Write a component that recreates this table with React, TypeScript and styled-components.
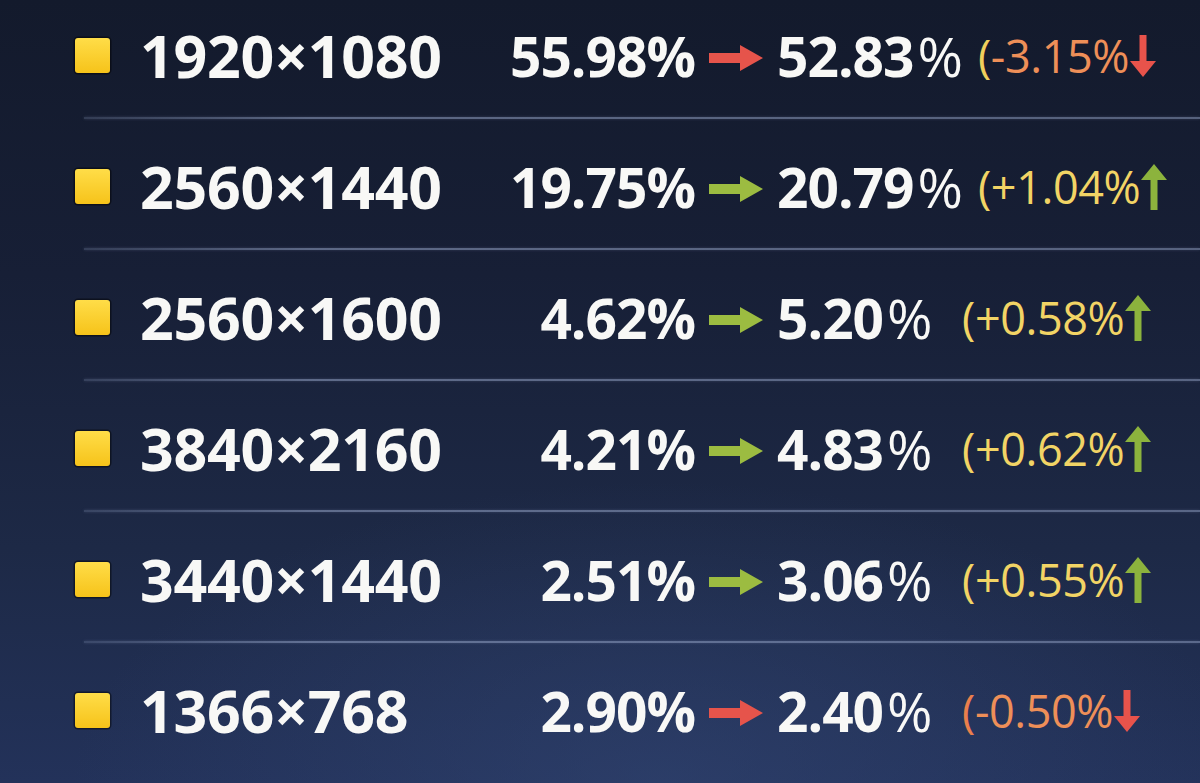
import React from "react";
import styled, { createGlobalStyle } from "styled-components";

const GlobalStyle = createGlobalStyle`
  html, body {
    margin: 0;
    padding: 0;
    background: #141b2f;
  }
  * {
    box-sizing: border-box;
  }
`;

const Page = styled.div`
  width: 1200px;
  height: 783px;
  overflow: hidden;
  background:
    radial-gradient(ellipse 70% 55% at 55% 100%, rgba(52, 72, 118, 0.5), rgba(52, 72, 118, 0) 70%),
    linear-gradient(180deg, #131a2c 0%, #171f36 35%, #1d2946 70%, #23325a 100%);
  font-family: "Open Sans", "Noto Sans", sans-serif;
  color: #f8f8f6;
`;

const List = styled.div`
  display: flex;
  flex-direction: column;
`;

const Row = styled.div<{ $first?: boolean }>`
  display: grid;
  grid-template-columns: 34px 331px 255px 82px 1fr;
  align-items: center;
  padding-left: 75px;
  height: ${(p) => (p.$first ? "117px" : "131px")};
  padding-top: ${(p) => (p.$first ? "0" : "8px")};
  padding-bottom: ${(p) => (p.$first ? "6px" : "0")};
  position: relative;

  &::before {
    content: "";
    display: ${(p) => (p.$first ? "none" : "block")};
    position: absolute;
    left: 84px;
    right: 0;
    top: 0;
    height: 2px;
    background: linear-gradient(
      90deg,
      rgba(140, 155, 190, 0.25) 0%,
      rgba(150, 165, 200, 0.55) 20%,
      rgba(150, 165, 200, 0.5) 100%
    );
    box-shadow: 0 0 3px rgba(150, 165, 200, 0.25);
  }
`;

const Square = styled.div`
  width: 35px;
  height: 35px;
  border-radius: 3px;
  background: linear-gradient(180deg, #ffdd48 0%, #f6c31a 100%);
  box-shadow: 0 0 0 1.5px rgba(0, 0, 0, 0.45);
`;

const Resolution = styled.div`
  padding-left: 31px;
  font-size: 59px;
  font-weight: 700;
  letter-spacing: -0.2px;
  white-space: nowrap;
  line-height: 1;
`;

const From = styled.div`
  text-align: right;
  font-size: 55px;
  font-weight: 700;
  letter-spacing: -1px;
  white-space: nowrap;
  line-height: 1;
`;

const ArrowCell = styled.div`
  display: flex;
  justify-content: center;
  align-items: center;
  padding-top: 4px;
`;

const ToCell = styled.div`
  display: flex;
  align-items: center;
  white-space: nowrap;
`;

const To = styled.div`
  min-width: 185px;
  padding-right: 16px;
  font-size: 55px;
  font-weight: 700;
  letter-spacing: -1px;
  line-height: 1;
`;

const Pct = styled.span`
  font-weight: 500;
  margin-left: 4px;
`;

const Delta = styled.div<{ $up: boolean; $parenTone: string }>`
  display: flex;
  align-items: center;
  font-size: 45px;
  font-weight: 400;
  letter-spacing: -0.4px;
  line-height: 1;
  color: ${(p) => (p.$up ? "#f2d465" : "#ee8f58")};

  & > span:first-child {
    color: ${(p) => p.$parenTone};
  }
`;

const TrendIcon = styled.svg`
  margin-left: 1px;
  flex-shrink: 0;
`;

const RED = "#e6544b";
const GREEN = "#9cbc41";

const RightArrow = ({ color }: { color: string }) => (
  <svg width="54" height="26" viewBox="0 0 54 26">
    <path d="M0 8 H31 V0 L54 13 L31 26 V18 H0 Z" fill={color} />
  </svg>
);

const Trend = ({ up }: { up: boolean }) =>
  up ? (
    <TrendIcon width="26" height="46" viewBox="0 0 26 46">
      <path d="M13 0 L26 16 H16.5 V46 H9.5 V16 H0 Z" fill="#8cb33d" />
    </TrendIcon>
  ) : (
    <TrendIcon width="26" height="42" viewBox="0 0 26 42">
      <path d="M9.5 0 H16.5 V26 H26 L13 42 L0 26 H9.5 Z" fill="#e8534b" />
    </TrendIcon>
  );

type Item = {
  res: string;
  from: string;
  to: string;
  delta: string;
  up: boolean;
  paren: string;
};

const data: Item[] = [
  { res: "1920×1080", from: "55.98%", to: "52.83", delta: "-3.15%", up: false, paren: "#f0cf5c" },
  { res: "2560×1440", from: "19.75%", to: "20.79", delta: "+1.04%", up: true, paren: "#f2d465" },
  { res: "2560×1600", from: "4.62%", to: "5.20", delta: "+0.58%", up: true, paren: "#f2d465" },
  { res: "3840×2160", from: "4.21%", to: "4.83", delta: "+0.62%", up: true, paren: "#f2d465" },
  { res: "3440×1440", from: "2.51%", to: "3.06", delta: "+0.55%", up: true, paren: "#f2d465" },
  { res: "1366×768", from: "2.90%", to: "2.40", delta: "-0.50%", up: false, paren: "#ea7f4c" },
];

const App: React.FC = () => {
  return (
    <>
      <GlobalStyle />
      <Page>
        <List>
          {data.map((d, i) => (
            <Row key={d.res} $first={i === 0}>
              <Square />
              <Resolution>{d.res}</Resolution>
              <From>{d.from}</From>
              <ArrowCell>
                <RightArrow color={d.up ? GREEN : RED} />
              </ArrowCell>
              <ToCell>
                <To>
                  {d.to}
                  <Pct>%</Pct>
                </To>
                <Delta $up={d.up} $parenTone={d.paren}>
                  <span>(</span>
                  <span>{d.delta}</span>
                  <Trend up={d.up} />
                </Delta>
              </ToCell>
            </Row>
          ))}
        </List>
      </Page>
    </>
  );
};

export default App;
